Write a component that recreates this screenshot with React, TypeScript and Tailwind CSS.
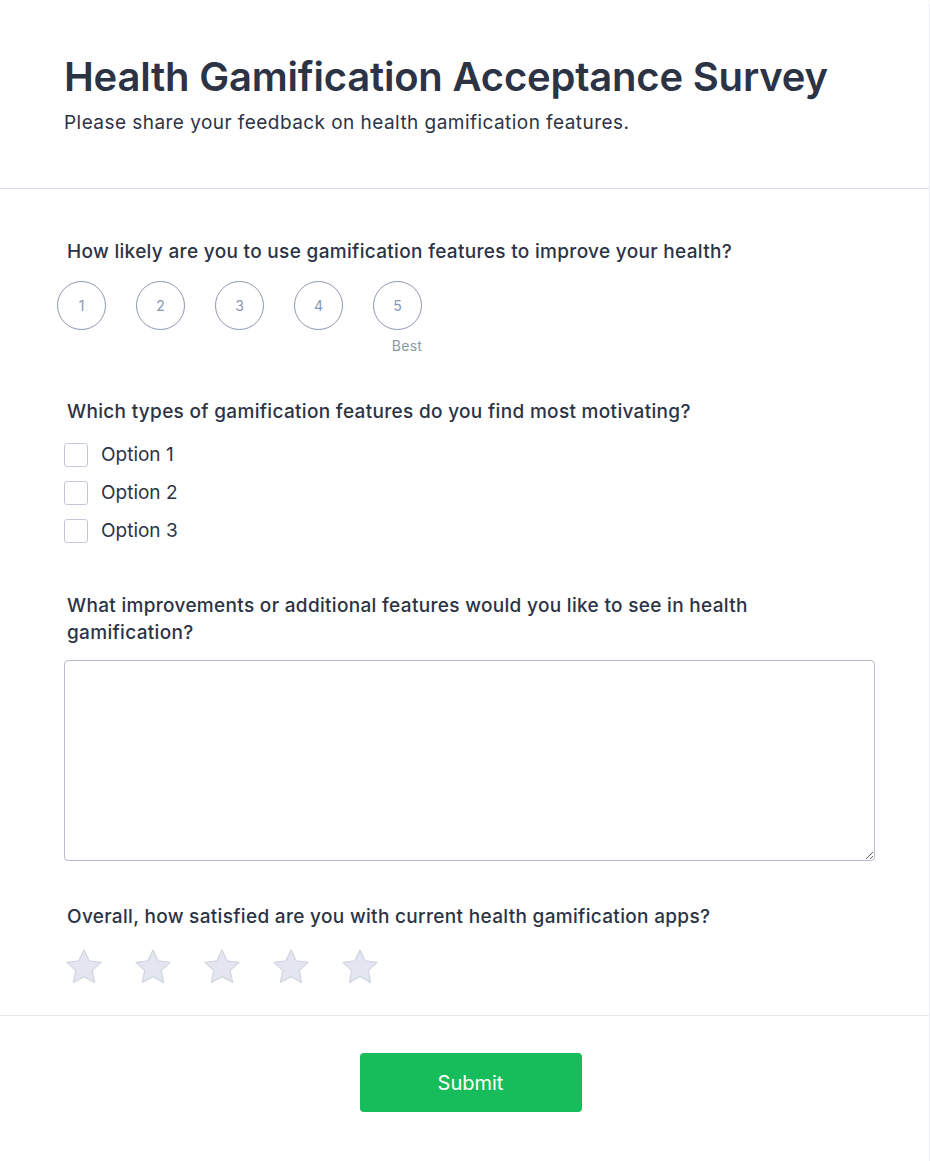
const scale = [1, 2, 3, 4, 5];
const options = ['Option 1', 'Option 2', 'Option 3'];

function Star() {
  return (
    <svg width="40" height="38" viewBox="0 0 24 23" className="block">
      <path
        d="M12 1.2l3.1 6.6 7.2.9-5.3 5 1.4 7.1L12 17.3l-6.4 3.5 1.4-7.1-5.3-5 7.2-.9z"
        fill="#e3e6f1"
        stroke="#d3d7e2"
        strokeWidth="0.8"
        strokeLinejoin="round"
      />
    </svg>
  );
}

export default function App() {
  return (
    <div className="min-h-[1161px] w-[930px] bg-white font-['Inter',sans-serif] text-[#2c3345]">
      <div className="min-h-[1161px] border-r border-[#eceef4] rounded-tr-md">
        <header className="px-16 pt-[52px] pb-[53px] border-b border-[#dadbe8]">
          <h1 className="text-[40px] leading-[50px] font-semibold tracking-[-0.2px]">
            Health Gamification Acceptance Survey
          </h1>
          <p className="mt-[9px] text-[19px] leading-[24px] tracking-[0.45px]">
            Please share your feedback on health gamification features.
          </p>
        </header>

        <main className="px-16 pt-[50px]">
          <section>
            <h2 className="px-[3px] text-[19px] leading-[26px] font-medium tracking-[0.32px]">
              How likely are you to use gamification features to improve your health?
            </h2>
            <div className="mt-[16px] flex gap-[30px] -ml-[7px]">
              {scale.map((n) => (
                <div key={n} className="flex w-[49px] flex-col items-center">
                  <div className="flex h-[49px] w-[49px] items-center justify-center rounded-full border border-[#8d97ad] text-[14px] text-[#8597b2]">
                    {n}
                  </div>
                  {n === 5 && (
                    <span className="mt-[7px] ml-[19px] text-[14px] leading-[18px] tracking-[0.3px] text-[#8a9aa8]">Best</span>
                  )}
                </div>
              ))}
            </div>
          </section>

          <section className="mt-[44px]">
            <h2 className="px-[3px] text-[19px] leading-[26px] font-medium tracking-[0.32px]">
              Which types of gamification features do you find most motivating?
            </h2>
            <div className="mt-[18px] flex flex-col gap-[14px]">
              {options.map((o) => (
                <label key={o} className="flex items-center gap-[13px]">
                  <span className="h-[24px] w-[24px] rounded-[3px] border border-[#c3c8d4] bg-white" />
                  <span className="text-[19px] leading-[24px]">{o}</span>
                </label>
              ))}
            </div>
          </section>

          <section className="mt-[49px]">
            <h2 className="px-[3px] pr-[100px] text-[19px] leading-[27px] font-medium tracking-[0.32px]">
              What improvements or additional features would you like to see in health gamification?
            </h2>
            <textarea className="mt-[14px] block h-[201px] w-[811px] rounded-[4px] border border-[#b8bdca] outline-none" />
          </section>

          <section className="mt-[43px]">
            <h2 className="px-[3px] text-[19px] leading-[26px] font-medium tracking-[0.32px]">
              Overall, how satisfied are you with current health gamification apps?
            </h2>
            <div className="mt-[18px] flex gap-[29px]">
              {scale.map((n) => (
                <Star key={n} />
              ))}
            </div>
          </section>
        </main>

        <footer className="mt-[29px] border-t border-[#e6e9f0] flex justify-center pt-[37px] pl-[12px]">
          <button className="h-[59px] w-[222px] rounded-[4px] bg-[#18bd5b] text-[20px] font-normal text-white">
            Submit
          </button>
        </footer>
      </div>
    </div>
  );
}
